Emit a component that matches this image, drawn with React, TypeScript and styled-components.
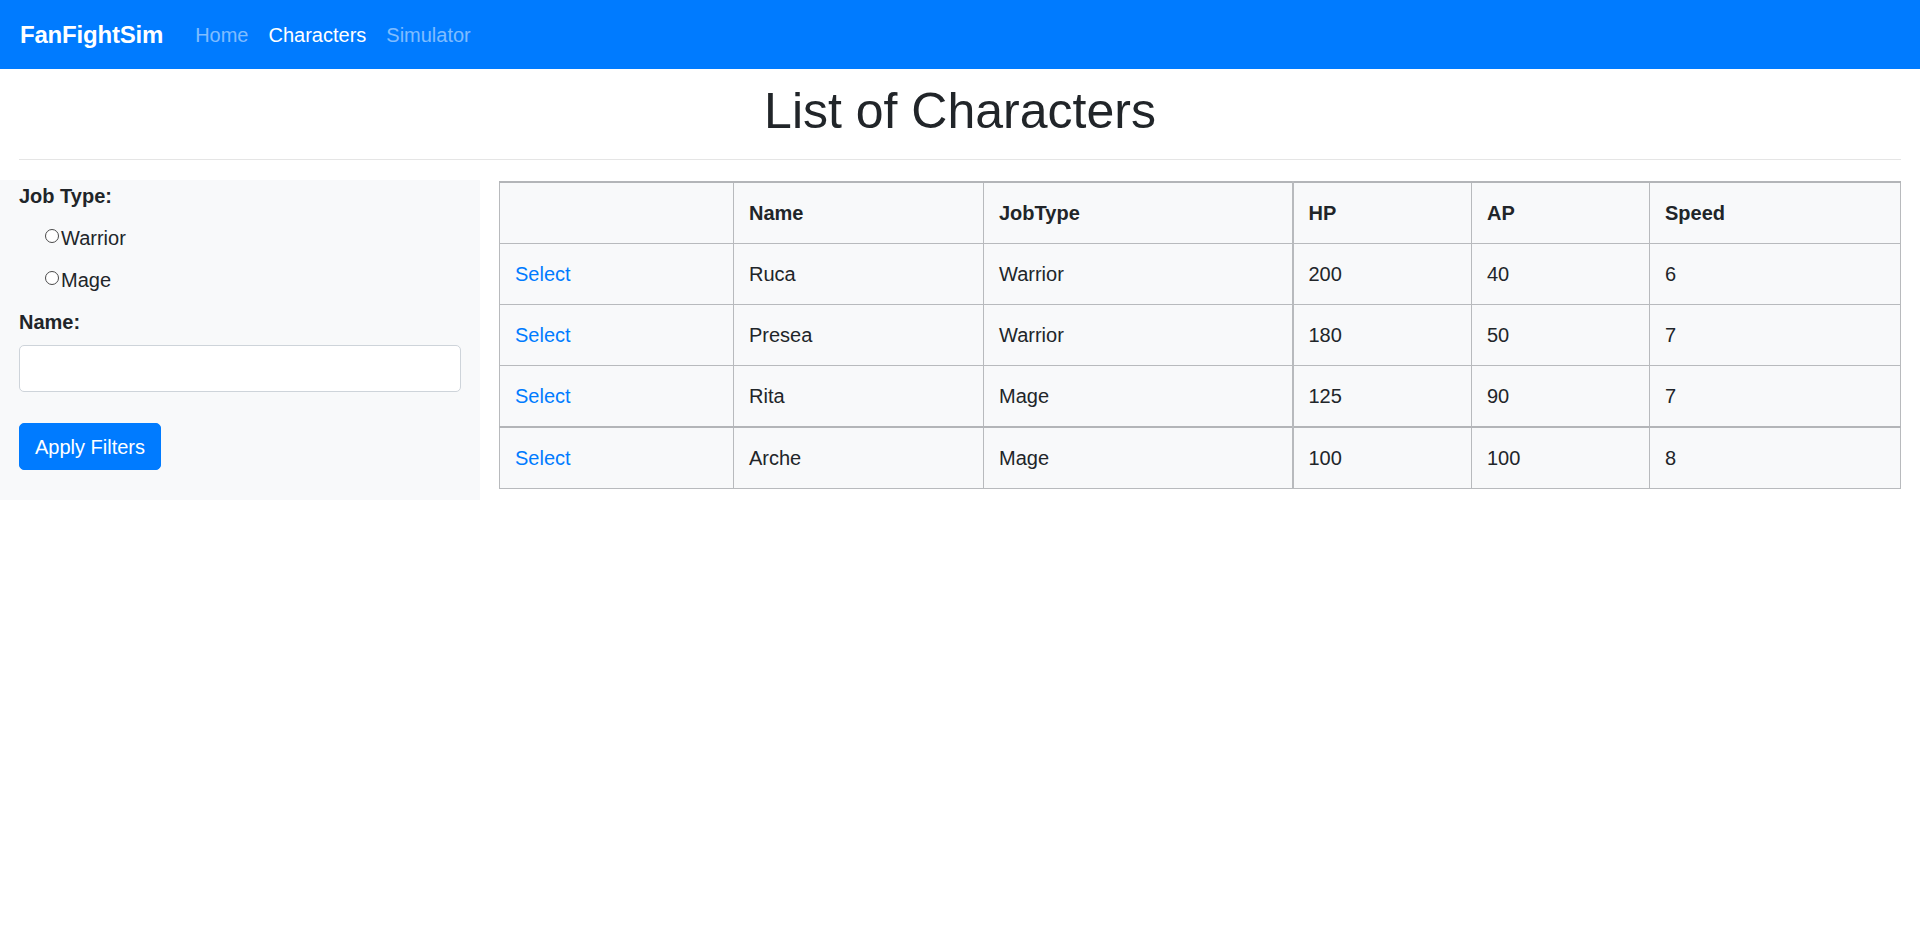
import React from "react";
import styled, { createGlobalStyle } from "styled-components";

const GlobalStyle = createGlobalStyle`
  html, body {
    margin: 0;
    padding: 0;
    background: #ffffff;
  }
  body {
    font-family: "Liberation Sans", Arial, sans-serif;
    font-size: 20px;
    line-height: 1.5;
    color: #212529;
  }
  * {
    box-sizing: border-box;
  }
`;

const Navbar = styled.nav`
  height: 69px;
  display: flex;
  align-items: center;
  padding: 0 20px;
  background-color: #007bff;
`;

const Brand = styled.a`
  font-size: 24px;
  font-weight: 700;
  letter-spacing: -0.2px;
  color: #ffffff;
  margin-right: 22px;
  text-decoration: none;
`;

const NavLink = styled.a<{ $active?: boolean }>`
  padding: 0 10px;
  font-size: 20px;
  color: ${({ $active }) => ($active ? "#ffffff" : "rgba(255, 255, 255, 0.5)")};
  text-decoration: none;
`;

const Header = styled.div`
  padding: 0 19px;
`;

const Title = styled.h1`
  margin: 10px 0 0;
  padding-top: 4px;
  font-size: 50px;
  font-weight: 500;
  line-height: 56px;
  text-align: center;
  color: #212529;
`;

const Divider = styled.hr`
  margin: 20px 0;
  border: 0;
  border-top: 1px solid #e5e5e5;
`;

const Row = styled.div`
  display: flex;
  align-items: flex-start;
`;

const FilterPanel = styled.form`
  width: 480px;
  flex-shrink: 0;
  padding: 1px 19px 30px;
  background-color: #f8f9fa;
`;

const Label = styled.label<{ $gap: number }>`
  display: block;
  font-weight: 700;
  margin-bottom: ${({ $gap }) => $gap}px;
`;

const RadioRow = styled.label`
  display: flex;
  align-items: flex-start;
  height: 30px;
  padding-left: 26px;
  margin-bottom: 12px;

  &:last-of-type {
    margin-bottom: 10px;
  }
`;

const Radio = styled.input.attrs({ type: "radio" })`
  appearance: none;
  width: 14px;
  height: 14px;
  margin: 6px 2px 0 0;
  border: 1.5px solid #4a4a4a;
  border-radius: 50%;
  background: #ffffff;
`;

const TextInput = styled.input`
  display: block;
  width: 100%;
  height: 47px;
  padding: 7.5px 15px;
  font: inherit;
  background: #ffffff;
  border: 1px solid #ced4da;
  border-radius: 5px;
  margin-bottom: 31px;
`;

const Button = styled.button`
  display: inline-block;
  height: 47px;
  padding: 0 15px;
  font: inherit;
  line-height: 30px;
  color: #ffffff;
  background-color: #007bff;
  border: 1px solid #007bff;
  border-radius: 5px;
`;

const TableColumn = styled.div`
  flex: 1;
  padding: 1px 19px 0;
`;

const Table = styled.table`
  width: 100%;
  table-layout: fixed;
  border-collapse: collapse;
  background-color: #f8f9fa;
  border-top: 2px solid #b3b5b8;
`;

const TableRow = styled.tr<{ $heavy?: boolean }>`
  border-top: ${({ $heavy }) => ($heavy ? "2px solid #b3b5b8" : "1px solid #b8babd")};
`;

const HeadCell = styled.th<{ $heavy?: boolean }>`
  padding: 15px;
  text-align: left;
  font-weight: 700;
  border: 1px solid #b8babd;
  border-left-width: ${({ $heavy }) => ($heavy ? "2px" : "1px")};
  border-top: 0;
`;

const Cell = styled.td<{ $heavy?: boolean }>`
  padding: 15px;
  border: 1px solid #b8babd;
  border-left-width: ${({ $heavy }) => ($heavy ? "2px" : "1px")};
  border-top: 0;
`;

const SelectLink = styled.a`
  color: #007bff;
  text-decoration: none;
`;

const columns = [
  { key: "", width: 234 },
  { key: "Name", width: 250 },
  { key: "JobType", width: 309 },
  { key: "HP", width: 179 },
  { key: "AP", width: 178 },
  { key: "Speed", width: 251 },
];

const characters = [
  { name: "Ruca", job: "Warrior", hp: 200, ap: 40, speed: 6 },
  { name: "Presea", job: "Warrior", hp: 180, ap: 50, speed: 7 },
  { name: "Rita", job: "Mage", hp: 125, ap: 90, speed: 7 },
  { name: "Arche", job: "Mage", hp: 100, ap: 100, speed: 8 },
];

const App: React.FC = () => (
  <>
    <GlobalStyle />
    <Navbar>
      <Brand href="#">FanFightSim</Brand>
      <NavLink href="#">Home</NavLink>
      <NavLink href="#" $active>
        Characters
      </NavLink>
      <NavLink href="#">Simulator</NavLink>
    </Navbar>

    <Header>
      <Title>List of Characters</Title>
      <Divider />
    </Header>

    <Row>
      <FilterPanel onSubmit={(e) => e.preventDefault()}>
        <Label $gap={12}>Job Type:</Label>
        <RadioRow>
          <Radio name="jobType" value="Warrior" />
          Warrior
        </RadioRow>
        <RadioRow>
          <Radio name="jobType" value="Mage" />
          Mage
        </RadioRow>
        <Label $gap={8}>Name:</Label>
        <TextInput type="text" />
        <Button type="submit">Apply Filters</Button>
      </FilterPanel>

      <TableColumn>
        <Table>
          <colgroup>
            {columns.map((c, i) => (
              <col key={i} style={{ width: c.width }} />
            ))}
          </colgroup>
          <thead>
            <tr>
              {columns.map((c, i) => (
                <HeadCell key={i} $heavy={c.key === "HP"}>
                  {c.key}
                </HeadCell>
              ))}
            </tr>
          </thead>
          <tbody>
            {characters.map((ch, i) => (
              <TableRow key={ch.name} $heavy={i === 3}>
                <Cell>
                  <SelectLink href="#">Select</SelectLink>
                </Cell>
                <Cell>{ch.name}</Cell>
                <Cell>{ch.job}</Cell>
                <Cell $heavy>{ch.hp}</Cell>
                <Cell>{ch.ap}</Cell>
                <Cell>{ch.speed}</Cell>
              </TableRow>
            ))}
          </tbody>
        </Table>
      </TableColumn>
    </Row>
  </>
);

export default App;
